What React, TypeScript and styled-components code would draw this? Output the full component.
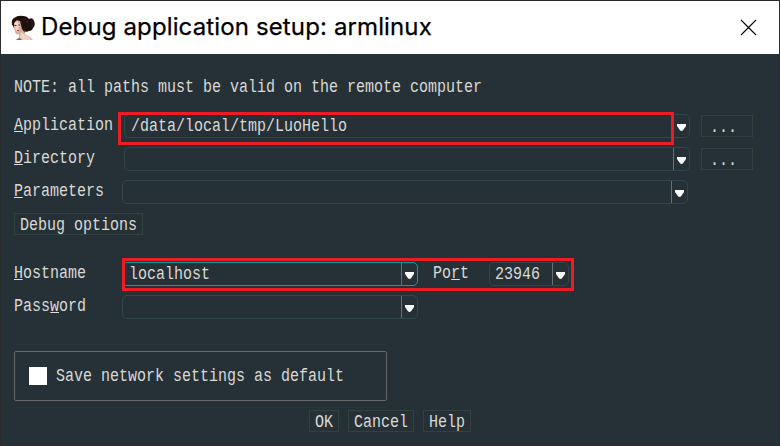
import React from "react";
import styled, { createGlobalStyle } from "styled-components";

const Global = createGlobalStyle`
  * { box-sizing: border-box; }
  body { margin: 0; background: #263238; }
`;

const Window = styled.div`
  width: 780px;
  height: 446px;
  border: 1px solid #2a2b2c;
  background: #263137;
  color: #dad9d5;
  overflow: hidden;
`;

const TitleBar = styled.header`
  height: 53px;
  padding: 0 22px 0 10px;
  background: #fff;
  display: flex;
  align-items: center;
`;

const Title = styled.h1`
  margin: -2px auto 0 5px;
  font: 400 24px/30px Inter, sans-serif;
  letter-spacing: 0.13px;
  -webkit-text-stroke: 0.25px #000;
  color: #000;
  white-space: nowrap;
`;

const CloseButton = styled.button`
  width: 17px;
  height: 17px;
  padding: 0;
  border: 0;
  background: none;
  display: flex;
`;

const Body = styled.main`
  padding: 24px 0 0 13px;
  display: flex;
  flex-direction: column;
  align-items: flex-start;
`;

/* Condensed monospace: 9px per character */
const Mono = styled.span`
  display: block;
  font: 19px/18px "Liberation Mono", monospace;
  white-space: pre;
  transform: scaleX(0.7893);
  transform-origin: 0 0;
`;

const TextBox = styled.span<{ $chars: number }>`
  display: block;
  flex: none;
  width: ${(p) => p.$chars * 9}px;
  height: 18px;
`;

const Mnemonic = styled.span`
  display: inline-block;
  height: 18px;
  line-height: 18px;
  vertical-align: top;
  background: linear-gradient(#dedede, #dedede) 0 15px / 100% 1px no-repeat;
`;

const Row = styled.div<{ $top?: number }>`
  display: flex;
  align-items: flex-start;
  height: 24px;
  margin-top: ${(p) => p.$top ?? 9}px;
`;

const Label = styled.label<{ $width: number }>`
  flex: none;
  width: ${(p) => p.$width}px;
  padding-top: 2px;
`;

const Combo = styled.div<{ $width: number; $active?: boolean; $pad?: number }>`
  flex: none;
  display: flex;
  width: ${(p) => p.$width}px;
  height: 24px;
  border: 1px solid ${(p) => (p.$active ? "#079fa5" : "#30464b")};
  border-radius: 5px;
  padding-left: ${(p) => p.$pad ?? 6}px;
`;

const ComboValue = styled.div`
  flex: 1;
  padding-top: 2px;
`;

const Drop = styled.div`
  width: 16px;
  border-left: 1px solid #6c6e70;
  padding: 9px 0 0 3px;
`;

const Arrow = styled.svg`
  display: block;
`;

const PushButton = styled.button<{ $width: number; $pad?: number }>`
  flex: none;
  width: ${(p) => p.$width}px;
  height: 22px;
  padding: 1px 0 0 ${(p) => p.$pad ?? 5}px;
  border: 1px solid #30433f;
  background: none;
  color: inherit;
  text-align: left;
`;

const BrowseButton = styled(PushButton)`
  margin: 1px 0 0 11px;
`;

const Spacer = styled.div<{ $width: number }>`
  flex: none;
  width: ${(p) => p.$width}px;
`;

const Highlighted = styled.div`
  position: relative;
`;

const Highlight = styled.div<{ $x: number; $y: number; $w: number; $h: number }>`
  position: absolute;
  left: ${(p) => p.$x}px;
  top: ${(p) => p.$y}px;
  width: ${(p) => p.$w}px;
  height: ${(p) => p.$h}px;
  border: 3px solid #ed1c24;
  pointer-events: none;
`;

const Group = styled.label`
  display: flex;
  width: 373px;
  height: 50px;
  margin-top: 32px;
  padding: 15px 0 0 14px;
  gap: 9px;
  border: 1px solid #666869;
  border-radius: 2px;
`;

const Check = styled.span`
  width: 18px;
  height: 18px;
  background: #fff;
`;

const Footer = styled.footer`
  display: flex;
  gap: 9px;
  margin: 9px 0 0 295px;
`;

function Text({ children, mark }: { children: string; mark?: number }) {
  return (
    <TextBox $chars={children.length}>
      <Mono>
        {mark === undefined ? (
          children
        ) : (
          <>
            {children.slice(0, mark)}
            <Mnemonic>{children[mark]}</Mnemonic>
            {children.slice(mark + 1)}
          </>
        )}
      </Mono>
    </TextBox>
  );
}

function ComboBox(props: { width: number; value?: string; active?: boolean; pad?: number }) {
  return (
    <Combo $width={props.width} $active={props.active} $pad={props.pad}>
      <ComboValue>{props.value && <Text>{props.value}</Text>}</ComboValue>
      <Drop>
        <Arrow width="9" height="7" viewBox="0 0 9 7">
          <path d="M0 0H9V2L6 6.2Q4.5 7.6 3 6.2L0 2Z" fill="#fff" />
        </Arrow>
      </Drop>
    </Combo>
  );
}

function Portrait() {
  return (
    <svg width="25" height="26" viewBox="0 0 25 26">
      <path d="M1 10Q0 5 3 3Q7 0 12 1Q16 1 18 4Q22 2 23 6Q25 10 22 13Q21 16 18 16L15 17L8 10Z" fill="#1d100d" />
      <path d="M3 6Q8 4 11 8L12 13L14 19L19 22L22 25H6L8 22L8 19Q5 20 4 17L3 12Z" fill="#d9ad97" />
      <path d="M4 6Q8 6 8 11L7 17Q4 16 4 11Z" fill="#f0d6c6" />
      <path d="M10 17L13 19L18 22L20 25H12L9 22Z" fill="#ecd5c8" />
      <path d="M1 9L2 4L7 2L5 6L3 8L3 13ZM9 6L13 10L14 18L11 14Z" fill="#24110d" />
      <path d="M3.5 10.5H5.5M7.5 10H9" stroke="#432a22" />
      <path d="M6 15.5H8" stroke="#a44434" />
      <path d="M5 25L8 23L11 25Z" fill="#8e5d45" />
      <path d="M12 4Q16 3 17 8M20 6Q22 7 21 10" fill="none" stroke="#3b221d" />
    </svg>
  );
}

export default function App() {
  return (
    <>
      <Global />
      <Window>
        <TitleBar>
          <Portrait />
          <Title>Debug application setup: armlinux</Title>
          <CloseButton aria-label="Close">
            <svg width="17" height="17" viewBox="0 0 17 17">
              <path d="M1 1L16 16M16 1L1 16" stroke="#000" strokeWidth="1.1" />
            </svg>
          </CloseButton>
        </TitleBar>
        <Body>
          <Text>NOTE: all paths must be valid on the remote computer</Text>
          <Highlighted>
            <Row $top={18}>
              <Label $width={110}><Text mark={0}>Application</Text></Label>
              <ComboBox width={566} value="/data/local/tmp/LuoHello" />
              <BrowseButton $width={52} $pad={8}><Text>...</Text></BrowseButton>
            </Row>
            <Highlight $x={104} $y={16} $w={556} $h={33} />
          </Highlighted>
          <Row>
            <Label $width={110}><Text mark={0}>Directory</Text></Label>
            <ComboBox width={566} />
            <BrowseButton $width={52} $pad={8}><Text>...</Text></BrowseButton>
          </Row>
          <Row>
            <Label $width={108}><Text mark={0}>Parameters</Text></Label>
            <ComboBox width={566} />
          </Row>
          <Row>
            <PushButton $width={129}><Text>Debug options</Text></PushButton>
          </Row>
          <Highlighted>
            <Row $top={25}>
              <Label $width={108}><Text mark={0}>Hostname</Text></Label>
              <ComboBox width={296} active value="localhost" />
              <Spacer $width={15} />
              <Label $width={56}><Text mark={2}>Port</Text></Label>
              <ComboBox width={80} value="23946" pad={5} />
            </Row>
            <Highlight $x={108} $y={21} $w={452} $h={33} />
          </Highlighted>
          <Row>
            <Label $width={108}><Text mark={4}>Password</Text></Label>
            <ComboBox width={296} />
          </Row>
          <Group>
            <Check />
            <Text>Save network settings as default</Text>
          </Group>
          <Footer>
            <PushButton $width={30}><Text>OK</Text></PushButton>
            <PushButton $width={66}><Text>Cancel</Text></PushButton>
            <PushButton $width={48}><Text>Help</Text></PushButton>
          </Footer>
        </Body>
      </Window>
    </>
  );
}
